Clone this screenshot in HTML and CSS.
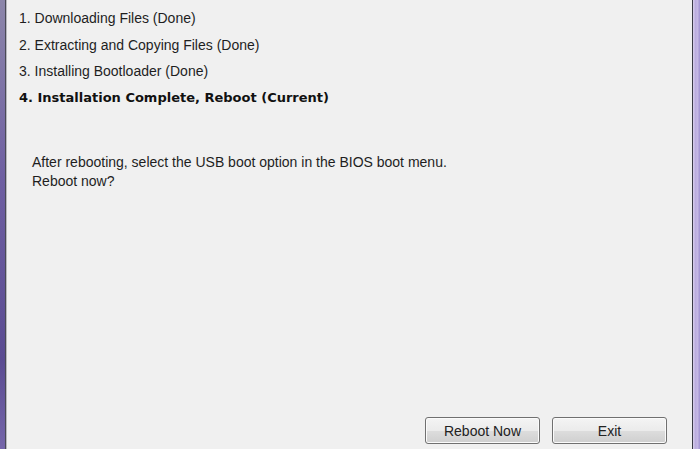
FILE: index.html
```html
<!DOCTYPE html>
<html>
<head>
    <meta charset="UTF-8">
    <title>Installation Complete</title>
    <link rel="stylesheet" href="styles.css">
</head>
<body>
	<div class="window">
		<div class="frame frame-left"></div>
		<main class="content">
			<ol class="steps">
				<li>1. Downloading Files (Done)</li>
				<li>2. Extracting and Copying Files (Done)</li>
				<li>3. Installing Bootloader (Done)</li>
				<li class="current">4. Installation Complete, Reboot (Current)</li>
			</ol>
			<p class="message">After rebooting, select the USB boot option in the BIOS boot menu.<br>Reboot now?</p>
			<div class="buttons">
				<button class="btn">Reboot Now</button>
				<button class="btn">Exit</button>
			</div>
		</main>
		<div class="frame frame-right"></div>
	</div>
</body>
</html>
```

FILE: styles.css
```css
body,ol,p{
	margin: 0;
	padding: 0;
}
body{
	font-family: "Liberation Sans", Arial, sans-serif;
	font-size: 14px;
	color: #1e1e1e;
}
.window{
	display: flex;
	height: 449px;
	width: 700px;
}
.frame-left{
	width: 5px;
	background: linear-gradient(#8c86aa, #6e5fa2 40%, #5a4b92 80%, #7566aa);
	border-right: 1px solid #4a4a55;
	box-shadow: 1px 0 0 #b8b8c0;
}
.frame-right{
	width: 7px;
	border-left: 1px solid #3a3a44;
	background: linear-gradient(90deg, #d8d0ec, #b8a8dc 40%, #c8bce6 60%, #a090d0);
}
.content{
	flex: 1;
	display: flex;
	flex-direction: column;
	background: #f0f0f0;
	margin-left: 1px;
}
.steps{
	list-style: none;
	padding: 5px 0 0 12px;
	line-height: 26.5px;
}
.steps .current{
	font-family: "DejaVu Sans", Verdana, sans-serif;
	font-size: 13px;
	font-weight: bold;
	color: #111;
}
.message{
	margin-top: 42px;
	padding-left: 25px;
	line-height: 19px;
}
.buttons{
	margin-top: auto;
	display: flex;
	justify-content: flex-end;
	gap: 12px;
	padding: 0 25px 5px 0;
}
.btn{
	width: 115px;
	height: 27px;
	font-family: inherit;
	font-size: 14px;
	color: #222;
	border: 1px solid #707070;
	border-radius: 3px;
	background: linear-gradient(#f4f4f4, #ebebeb 50%, #dddddd 51%, #cfcfcf);
	box-shadow: inset 0 0 0 1px #fbfbfb;
}
```
